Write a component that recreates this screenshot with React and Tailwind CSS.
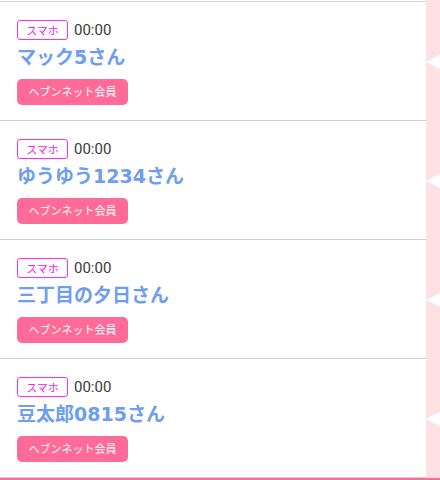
import React from 'react';

const members = [
  { id: 1, device: 'スマホ', time: '00:00', name: 'マック5さん' },
  { id: 2, device: 'スマホ', time: '00:00', name: 'ゆうゆう1234さん' },
  { id: 3, device: 'スマホ', time: '00:00', name: '三丁目の夕日さん' },
  { id: 4, device: 'スマホ', time: '00:00', name: '豆太郎0815さん' },
];

const font = { fontFamily: '"Noto Sans CJK JP", "Noto Sans", sans-serif' };
const latinFirst = { fontFamily: '"DejaVu Sans", "Noto Sans CJK JP", sans-serif' };
const timeFont = { fontFamily: 'Roboto, "Noto Sans CJK JP", sans-serif' };

const MemberRow = ({ item }) => (
  <div className="flex h-[119px]">
    <div className="flex-1 bg-white border-b border-[#cfcfcf] pl-[17px] pt-[18px]">
      <div className="flex items-center gap-[6px] h-[20px]">
        <span className="h-[20px] w-[51px] flex items-center justify-center border border-[#ff2cf0] rounded-[3px] text-[11px] leading-none text-[#f522e6]">
          {item.device}
        </span>
        <span className="text-[15px] leading-none text-[#3a3a3a]" style={timeFont}>
          {item.time}
        </span>
      </div>
      <div
        className="mt-[5px] h-[24px] flex items-center text-[19px] font-bold leading-none text-[#6f9ef0]"
        style={latinFirst}
      >
        {item.name}
      </div>
      <div className="mt-[8px]">
        <span className="inline-flex items-center justify-center h-[26px] w-[111px] rounded-[5px] bg-[#ff6b99] text-[11px] leading-none text-white">
          ヘブンネット会員
        </span>
      </div>
    </div>
    <div className="w-[14px] bg-[#ffe0e3] flex items-center">
      <div className="w-0 h-0 border-y-[7px] border-y-transparent border-r-[14px] border-r-white" />
    </div>
  </div>
);

const App = () => {
  return (
    <div className="w-[440px] h-[480px] overflow-hidden bg-white" style={font}>
      <div className="flex h-[2px]">
        <div className="flex-1 bg-white border-b border-[#d6d6d6]" />
        <div className="w-[14px] bg-[#ffe0e3]" />
      </div>
      {members.map((item) => (
        <MemberRow key={item.id} item={item} />
      ))}
      <div className="h-[3px] bg-[#ff6b99]" />
    </div>
  );
};

export default App;
